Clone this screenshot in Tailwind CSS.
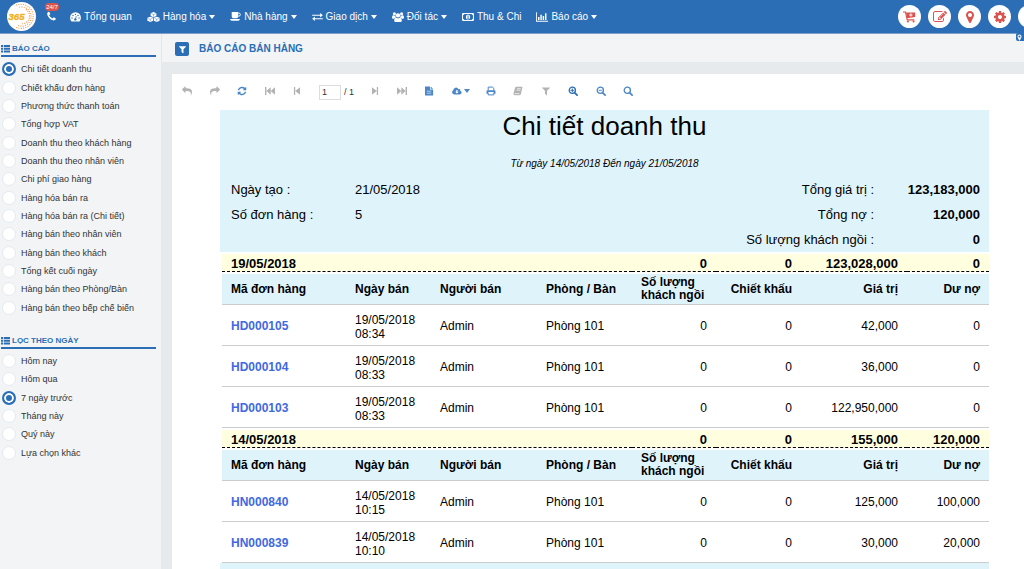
<!DOCTYPE html>
<html lang="vi">
<head>
    <meta charset="UTF-8">
    <meta name="viewport" content="width=device-width, initial-scale=1.0">
    <title>Báo cáo bán hàng</title>
    <script src="https://cdn.jsdelivr.net/npm/@tailwindcss/browser@4"></script>
</head>
<body class="min-h-screen flex flex-col overflow-x-hidden bg-[#e6eaed] font-['Liberation_Sans',Arial,sans-serif] text-[#333]">
    <!-- Shared icons -->
    <svg class="hidden">
        <symbol id="caret" viewBox="0 0 6 4"><path d="M0 0h6L3 4z"/></symbol>
        <symbol id="marker" viewBox="0 0 1792 1792"><path d="M1152 640q0-106-75-181t-181-75-181 75-75 181 75 181 181 75 181-75 75-181zm256 0q0 109-33 179l-364 774q-16 33-47.5 52t-67.5 19-67.5-19-46.5-52l-365-774q-33-70-33-179 0-212 150-362t362-150 362 150 150 362z"/></symbol>
        <symbol id="filter" viewBox="0 0 1792 1792"><path d="M1595 295q17 41-14 70l-493 493v742q0 42-39 59-13 5-25 5-27 0-45-19l-256-256q-19-19-19-45v-486l-493-493q-31-29-14-70 17-39 59-39h1280q42 0 59 39z"/></symbol>
        <symbol id="share" viewBox="0 0 1792 1792"><path d="M1792 640q0 26-19 45l-512 512q-19 19-45 19t-45-19-19-45v-256h-224q-98 0-175.5 6t-154 21.5-133 42.5-105.5 69.5-80 101-48.5 138.5-17.5 181q0 55 5 123 0 6 2.5 23.5t2.5 26.5q0 15-8.5 25t-23.5 10q-16 0-28-17-7-9-13-22t-13.5-30-10.5-24q-127-285-127-451 0-199 53-333 162-403 875-403h224v-256q0-26 19-45t45-19 45 19l512 512q19 19 19 45z"/></symbol>
        <symbol id="list" viewBox="0 0 9 8"><path d="M0 0h2.200v2H0zM3 0h6v2H3zM0 2.700h2.200v2H0zM3 2.700h6v2H3zM0 5.400h2.200v2H0zM3 5.400h6v2H3z"/></symbol>
        <symbol id="step" viewBox="0 0 10 10"><path d="M2 1.200 6.800 5 2 8.800zM6.800 1h1.300v8H6.800z"/></symbol>
        <symbol id="fast" viewBox="0 0 10 10"><path d="M0 1.200 4.300 5 0 8.800zM4.300 1.200 8.600 5 4.300 8.800zM8.600 1H10v8H8.600z"/></symbol>
        <symbol id="lens" viewBox="0 0 10 10"><circle cx="4.300" cy="4.300" r="3.100" fill="none" stroke="currentColor" stroke-width="1.300"/><path d="m6.800 6.800 2.300 2.300" stroke="currentColor" stroke-width="1.700" stroke-linecap="round"/></symbol>
    </svg>

    <header class="relative flex h-[34px] shrink-0 items-center border-b border-[#7f9fcb] bg-[#2b6eb5] text-white">
        <a href="#" aria-label="365" class="ml-[7px] shrink-0">
            <svg viewBox="0 0 30 30" class="size-[29px]">
                <circle cx="15" cy="15" r="15" fill="#fff"/>
                <g fill="none" stroke="#ee9445" stroke-linecap="round" stroke-width="1.200" stroke-dasharray=".1 2.300">
                    <path d="M10 3.200a12.500 12.500 0 1 1-1 22.800"/>
                    <path d="M13 5.200a10 10 0 1 1-3 18.500"/>
                    <path d="M20 8a8 8 0 0 1-5 14.500"/>
                </g>
                <text x="1.500" y="18.500" font-size="10" font-weight="bold" font-style="italic" fill="#f0b01e" stroke="#f0b01e" stroke-width=".3">365</text>
            </svg>
        </a>
        <a href="#" aria-label="24/7" class="relative ml-[10px] shrink-0">
            <svg viewBox="0 0 1792 1792" fill="currentColor" class="size-[11px]"><path d="M1600 1240q0 27-10 70.5t-21 68.5q-21 50-122 106-94 51-186 51-27 0-53-3.5t-57.5-12.5-47-14.5-55.5-20.5-49-18q-98-35-175-83-127-79-264-216t-216-264q-48-77-83-175-3-9-18-49t-20.5-55.5-14.5-47-12.5-57.5-3.5-53q0-92 51-186 56-101 106-122 25-11 68.5-21t70.5-10q14 0 21 3 18 6 53 76 11 19 30 54t35 63.5 31 53.5q3 4 17.5 25t21.5 35.5 7 28.5q0 20-28.5 50t-62 55-62 53-28.5 46q0 9 5 22.5t8.5 20.5 14 24 11.5 19q76 137 174 235t235 174q2 1 19 11.5t24 14 20.5 8.5 22.5 5q18 0 46-28.5t53-62 55-62 50-28.5q14 0 28.5 7t35.5 21.5 25 17.5q25 15 53.5 31t63.5 35 54 30q70 35 76 53 3 7 3 21z"/></svg>
            <span class="absolute -top-2 -left-px flex h-2 w-[14px] items-center justify-center rounded-full bg-[#d9534f] text-[6px] leading-none">24/7</span>
        </a>
        <nav class="ml-[13px] flex flex-1 items-center gap-[15px] text-[10px] leading-4 whitespace-nowrap">
            <a href="#" class="flex items-center gap-[3px]">
                <svg viewBox="0 0 16 14" class="h-[10px] w-[11px]"><path fill="currentColor" d="M2.300 13.500A7.900 7.900 0 1 1 13.700 13.500z"/><g fill="#2b6eb5"><circle cx="2.900" cy="8.500" r="1"/><circle cx="4.400" cy="4.800" r="1"/><circle cx="8" cy="3.200" r="1"/><circle cx="11.600" cy="4.800" r="1"/><circle cx="13.100" cy="8.500" r="1"/><circle cx="7.800" cy="10.500" r="1.700"/></g><path stroke="#2b6eb5" stroke-width="1" d="m7.800 10.500 1.400-5"/></svg>
                Tổng quan
            </a>
            <a href="#" class="flex items-center gap-[3px]">
                <svg viewBox="0 0 18 14" class="h-[10px] w-[13px]"><g fill="currentColor"><path d="m9 0 4 1.600v4L9 7.300 5 5.600v-4z"/><path d="m4.500 6.500 4 1.700v4L4.500 14l-4-1.800v-4z"/><path d="m13.500 6.500 4 1.700v4l-4 1.800-4-1.800v-4z"/></g><path fill="none" stroke="#2b6eb5" stroke-width=".6" d="m6 2.300 3 1.200 3-1.200M9 3.500v3M1.500 9l3 1.200 3-1.200M4.500 10.200v3M10.500 9l3 1.200 3-1.200M13.500 10.200v3"/></svg>
                Hàng hóa
                <svg class="h-[4px] w-[6px]" fill="currentColor"><use href="#caret"/></svg>
            </a>
            <a href="#" class="flex items-center gap-[3px]">
                <svg viewBox="0 0 16 13" class="h-[9px] w-[11px]"><path fill="currentColor" d="M2.500 0H12v6.500A2.500 2.500 0 0 1 9.500 9H5a2.500 2.500 0 0 1-2.500-2.500zM0 10.300h14.500Q14 12.500 12 12.500H2.500Q.5 12.500 0 10.300z"/><path fill="none" stroke="currentColor" stroke-width="1.400" d="M12 1.500h.8a2.200 2.200 0 0 1 0 4.500H12"/></svg>
                Nhà hàng
                <svg class="h-[4px] w-[6px]" fill="currentColor"><use href="#caret"/></svg>
            </a>
            <a href="#" class="flex items-center gap-[3px]">
                <svg viewBox="0 0 16 12" class="h-[8px] w-[11px]" fill="currentColor"><path d="M0 2.500h12V0l4 3.400-4 3.300V4.300H0zM16 7.700H4V5.300L0 8.700 4 12V9.500h12z"/></svg>
                Giao dịch
                <svg class="h-[4px] w-[6px]" fill="currentColor"><use href="#caret"/></svg>
            </a>
            <a href="#" class="flex items-center gap-[3px]">
                <svg viewBox="0 0 18 15" class="h-[10px] w-[12px]" fill="currentColor"><circle cx="3.600" cy="2.500" r="2.300"/><circle cx="14.400" cy="2.500" r="2.300"/><circle cx="9" cy="5" r="3.300"/><path d="M0 8.500Q0 5 2 5q2 .9 3 .4Q5 7.500 6 8.600 3.800 8.800 3 10H1.500Q0 10 0 8.500zM18 8.500Q18 5 16 5q-2 .9-3 .4 0 2.100-1 3.200 2.200.2 3 1.400h1.500q1.500 0 1.500-1.500zM3.300 13q0-4.500 3-4.500 2.700 1.600 5.400 0 3 0 3 4.500 0 2-2 2H5.300q-2 0-2-2z"/></svg>
                Đối tác
                <svg class="h-[4px] w-[6px]" fill="currentColor"><use href="#caret"/></svg>
            </a>
            <a href="#" class="flex items-center gap-[3px]">
                <svg viewBox="0 0 18 12" class="h-[8px] w-[12px]"><path fill="none" stroke="currentColor" stroke-width="1.500" d="M.8.8h16.400v10.400H.8z"/><path fill="currentColor" d="M1 1h3L1 4zM17 1h-3l3 3zM1 11h3L1 8zM17 11h-3l3-3z"/><ellipse cx="9" cy="6" rx="3.200" ry="3.800" fill="currentColor"/><path stroke="#2b6eb5" stroke-width="1.100" fill="none" d="M8 4.600 9.200 4v4M7.800 8h2.800"/></svg>
                Thu &amp; Chi
            </a>
            <a href="#" class="flex items-center gap-[3px]">
                <svg viewBox="0 0 18 14" class="h-[10px] w-[12px]" fill="currentColor"><path d="M0 0h1.300v12.700H18V14H0zM3 7h2.200v4.600H3zM6.500 3.500h2.200v8.100H6.500zM10 5.500h2.200v6.100H10zM13.500 1.500h2.200v10.100h-2.200z"/></svg>
                Báo cáo
                <svg class="h-[4px] w-[6px]" fill="currentColor"><use href="#caret"/></svg>
            </a>
        </nav>
        <div class="-mr-[17px] flex shrink-0 gap-[7px] text-[#d9534f]">
            <button type="button" aria-label="Giỏ hàng" class="flex size-[23px] items-center justify-center rounded-full bg-white">
                <svg viewBox="0 0 16 14" class="h-[12px] w-[13px]"><path fill="currentColor" d="M3.600 1.500H15V7L5 8.500z"/><path fill="none" stroke="currentColor" stroke-width="1.400" d="M0 .8h3l2.200 9.700H14"/><circle cx="6" cy="12.500" r="1.300" fill="currentColor"/><circle cx="13" cy="12.500" r="1.300" fill="currentColor"/><path stroke="#fff" stroke-width="1.200" d="M9.700 2.500v4M7.700 4.500h4"/></svg>
            </button>
            <button type="button" aria-label="Ghi chú" class="flex size-[23px] items-center justify-center rounded-full bg-white">
                <svg viewBox="0 0 1792 1792" fill="currentColor" class="size-[14px]"><path d="M888 1184l116-116-152-152-116 116v56h96v96h56zm440-720q-16-16-33 1l-350 350q-17 17-1 33t33-1l350-350q17-17 1-33zm80 594v190q0 119-84.5 203.5t-203.5 84.5h-832q-119 0-203.5-84.5t-84.5-203.5v-832q0-119 84.5-203.5t203.5-84.5h832q63 0 117 25 15 7 18 23 3 17-9 29l-49 49q-14 14-32 8-23-6-45-6h-832q-66 0-113 47t-47 113v832q0 66 47 113t113 47h832q66 0 113-47t47-113v-126q0-13 9-22l64-64q15-15 35-7t20 29zm-96-738l288 288-672 672h-288v-288zm444 132l-92 92-288-288 92-92q28-28 68-28t68 28l152 152q28 28 28 68t-28 68z"/></svg>
            </button>
            <button type="button" aria-label="Chi nhánh" class="flex size-[23px] items-center justify-center rounded-full bg-white">
                <svg class="size-[14px]" fill="currentColor"><use href="#marker"/></svg>
            </button>
            <button type="button" aria-label="Cài đặt" class="flex size-[23px] items-center justify-center rounded-full bg-white">
                <svg viewBox="0 0 1792 1792" fill="currentColor" class="size-[14px]"><path d="M1152 896q0-106-75-181t-181-75-181 75-75 181 75 181 181 75 181-75 75-181zm512-109v222q0 12-8 23t-20 13l-185 28q-19 54-39 91 35 50 107 138 10 12 10 25t-9 23q-27 37-99 108t-94 71q-12 0-26-9l-138-108q-44 23-91 38-16 136-29 186-7 28-36 28h-222q-14 0-24.5-8.5t-11.5-21.5l-28-184q-49-16-90-37l-141 107q-10 9-25 9-14 0-25-11-126-114-165-168-7-10-7-23 0-12 8-23 15-21 51-66.5t54-70.5q-27-50-41-99l-183-27q-13-2-21-12.5t-8-23.5v-222q0-12 8-23t19-13l186-28q14-46 39-92-40-57-107-138-10-12-10-24 0-10 9-23 26-36 98.5-107.5t94.5-71.5q13 0 26 10l138 107q44-23 91-38 16-136 29-186 7-28 36-28h222q14 0 24.5 8.5t11.5 21.5l28 184q49 16 90 37l142-107q9-9 24-9 13 0 25 10 129 119 165 170 7 8 7 22 0 12-8 23-15 21-51 66.5t-54 70.5q26 50 41 98l183 28q13 2 21 12.5t8 23.5z"/></svg>
            </button>
            <button type="button" aria-label="Tài khoản" class="flex size-[23px] items-center justify-center rounded-full bg-white">
                <svg viewBox="0 0 12 12" class="size-[12px]" fill="currentColor"><circle cx="6" cy="3.500" r="3"/><path d="M0 12q0-5 3-5h6q3 0 3 5z"/></svg>
            </button>
        </div>
        <span class="absolute top-[33px] right-0 flex h-[8px] w-[8px] items-center rounded-l-xs bg-[#2b6eb5]">
            <svg class="size-[7px]" fill="currentColor"><use href="#marker"/></svg>
        </span>
    </header>

    <div class="flex flex-1">
        <aside class="w-[161px] shrink-0 bg-[#f2f4f6] pr-[5px] pl-px">
            <h2 class="mb-[3px] flex h-[23px] items-end gap-[2px] border-b-2 border-[#2b6eb5] pb-[2px] text-[8px] leading-[9px] font-bold text-[#2b6eb5]">
                <svg class="h-[8px] w-[9px]" fill="currentColor"><use href="#list"/></svg>BÁO CÁO
            </h2>
            <div id="reportList" class="grid h-[257px] auto-rows-fr"></div>
            <h2 class="mt-[9px] mb-[3px] flex h-[23px] items-end gap-[2px] border-b-2 border-[#2b6eb5] pb-[2px] text-[8px] leading-[9px] font-bold text-[#2b6eb5]">
                <svg class="h-[8px] w-[9px]" fill="currentColor"><use href="#list"/></svg>LỌC THEO NGÀY
            </h2>
            <div id="dateList" class="grid h-[110px] auto-rows-fr"></div>
        </aside>

        <main class="flex min-w-0 flex-1 flex-col">
            <div class="flex h-[28px] items-center gap-[10px] border-l border-[#e2e5e9] bg-[#f2f4f6] pt-[2px] pl-[13px]">
                <button type="button" aria-label="Bộ lọc" class="flex size-[14px] items-center justify-center rounded-xs bg-[#2b6eb5] text-white">
                    <svg class="size-[9px]" fill="currentColor"><use href="#filter"/></svg>
                </button>
                <h1 class="text-[10px] leading-3 font-bold text-[#2b6eb5]">BÁO CÁO BÁN HÀNG</h1>
            </div>

            <section class="mt-3 ml-[11px] flex-1 bg-white">
                <!-- Report toolbar -->
                <div class="flex h-[36px] items-center pb-[2px] pl-[10px] text-[#4a86c8]">
                    <div class="flex w-[120px] justify-between">
                        <button type="button" aria-label="Quay lại" class="size-[10px] text-[#b3b3b3]"><svg class="size-[10px] -scale-x-100" fill="currentColor"><use href="#share"/></svg></button>
                        <button type="button" aria-label="Tiến tới" class="size-[10px] text-[#b3b3b3]"><svg class="size-[10px]" fill="currentColor"><use href="#share"/></svg></button>
                        <button type="button" aria-label="Làm mới" class="size-[10px]"><svg viewBox="0 0 1792 1792" class="size-[10px]" fill="currentColor"><path d="M1639 1056q0 5-1 7-64 268-268 434.5t-478 166.5q-146 0-282.5-55t-243.5-157l-129 129q-19 19-45 19t-45-19-19-45v-448q0-26 19-45t45-19h448q26 0 45 19t19 45-19 45l-137 137q71 66 161 102t187 36q134 0 250-65t186-179q11-17 53-117 8-23 30-23h192q13 0 22.5 9.5t9.500 22.500zm25-800v448q0 26-19 45t-45 19h-448q-26 0-45-19t-19-45 19-45l138-138q-148-137-349-137-134 0-250 65t-186 179q-11 17-53 117-8 23-30 23h-199q-13 0-22.5-9.5t-9.5-22.5v-7q65-268 270-434.5t480-166.5q146 0 284 55.5t245 156.5l130-129q19-19 45-19t45 19 19 45z"/></svg></button>
                        <button type="button" aria-label="Trang đầu" class="size-[10px] text-[#b3b3b3]"><svg class="size-[10px] -scale-x-100" fill="currentColor"><use href="#fast"/></svg></button>
                        <button type="button" aria-label="Trang trước" class="size-[10px] text-[#b3b3b3]"><svg class="size-[10px] -scale-x-100" fill="currentColor"><use href="#step"/></svg></button>
                    </div>
                    <label class="ml-[17px] flex items-center gap-[3px] pt-[2px] text-[9px] leading-3 text-[#333]">
                        <input type="text" value="1" aria-label="Trang" class="h-[15px] w-[22px] border border-[#ddd] pl-[2px] text-[9px]">
                        / 1
                    </label>
                    <div class="ml-[16px] flex w-[64px] justify-between">
                        <button type="button" aria-label="Trang sau" class="size-[10px] text-[#b3b3b3]"><svg class="size-[10px]" fill="currentColor"><use href="#step"/></svg></button>
                        <button type="button" aria-label="Trang cuối" class="size-[10px] text-[#b3b3b3]"><svg class="size-[10px]" fill="currentColor"><use href="#fast"/></svg></button>
                        <button type="button" aria-label="Xem trang" class="size-[10px]"><svg viewBox="0 0 10 10" class="size-[10px]"><path fill="currentColor" d="M1 .4h5v3h3.100v6.200H1zM6.700.4l2.400 2.400H6.700z"/><path stroke="#fff" stroke-width=".6" d="M2.800 5.200h4.500M2.800 7.200h4.500"/></svg></button>
                    </div>
                    <button type="button" aria-label="Tải xuống" class="ml-[18px] flex items-center gap-[2px]">
                        <svg viewBox="0 0 11 8" class="h-[8px] w-[10px]"><path fill="currentColor" d="M2.500 7.800A2.400 2.400 0 0 1 1.400 3.300a3 3 0 0 1 5.700-1.300 1.600 1.600 0 0 1 2 1.700 2.100 2.100 0 0 1-.6 4.100z"/><path fill="#fff" d="M4.700 2.900h1.400v1.800h1.300L5.400 6.700l-2-2h1.300z"/></svg>
                        <svg class="h-[4px] w-[6px]" fill="currentColor"><use href="#caret"/></svg>
                    </button>
                    <div class="ml-[16px] flex w-[147px] justify-between">
                        <button type="button" aria-label="In" class="size-[10px]"><svg viewBox="0 0 10 10" class="size-[10px]"><path fill="none" stroke="currentColor" d="M2.200 4.500V1.100h4.500l1.100 1.100v2.300M2.200 6.500v2.400h5.600V6.500"/><path fill="currentColor" d="M1.500 4.200h7q1 0 1 1v2.600H8V6H2v1.800H.5V5.200q0-1 1-1z"/></svg></button>
                        <button type="button" aria-label="Sổ" class="size-[10px] text-[#b3b3b3]"><svg viewBox="0 0 10 10" class="size-[10px]"><path fill="currentColor" d="M3.300.8h5.500q.8 0 .6.800L7.800 8.200q-.2 1-1.200 1H1.500Q0 9.200.5 7.500l1.500-5.500Q2.400.8 3.300.8z"/><path stroke="#fff" stroke-width=".7" d="M4 2.700h3.800M3.600 4.200h3.800M1.500 7.700h5"/></svg></button>
                        <button type="button" aria-label="Lọc" class="size-[10px] text-[#b3b3b3]"><svg class="size-[10px]" fill="currentColor"><use href="#filter"/></svg></button>
                        <button type="button" aria-label="Phóng to" class="size-[10px] text-[#2b6eb5]"><svg viewBox="0 0 10 10" class="size-[10px]"><use href="#lens"/><path stroke="currentColor" d="M2.500 4.300h3.600M4.300 2.500v3.600"/></svg></button>
                        <button type="button" aria-label="Thu nhỏ" class="size-[10px]"><svg viewBox="0 0 10 10" class="size-[10px]"><use href="#lens"/><path stroke="currentColor" d="M2.700 4.300h3.200"/></svg></button>
                        <button type="button" aria-label="Tìm kiếm" class="size-[10px]"><svg viewBox="0 0 10 10" class="size-[10px]"><use href="#lens"/></svg></button>
                    </div>
                </div>

                <!-- Report page -->
                <article class="mr-[35px] ml-[48px] text-black">
                    <div class="bg-[#dff3fb]">
                        <h2 class="text-center text-[26px] leading-8">Chi tiết doanh thu</h2>
                        <p class="mt-3 text-center text-[10px] leading-5 italic">Từ ngày 14/05/2018 Đến ngày 21/05/2018</p>
                        <div class="mt-[3px] flex justify-between pr-[9px] pl-[11px] text-[13px] leading-[25px]">
                            <dl class="grid auto-rows-min grid-cols-[124px_auto]">
                                <dt>Ngày tạo :</dt><dd>21/05/2018</dd>
                                <dt>Số đơn hàng :</dt><dd>5</dd>
                            </dl>
                            <dl class="grid grid-cols-[auto_106px] text-right">
                                <dt>Tổng giá trị :</dt><dd class="font-bold">123,183,000</dd>
                                <dt>Tổng nợ :</dt><dd class="font-bold">120,000</dd>
                                <dt>Số lượng khách ngồi :</dt><dd class="font-bold">0</dd>
                            </dl>
                        </div>
                    </div>
                    <div id="groups" class="pl-[2px]"></div>
                    <div class="h-[6px] bg-[#dff3fb]"></div>
                </article>
            </section>
        </main>
    </div>

    <script>
        const reports = [
            'Chi tiết doanh thu', 'Chiết khấu đơn hàng', 'Phương thức thanh toán', 'Tổng hợp VAT',
            'Doanh thu theo khách hàng', 'Doanh thu theo nhân viên', 'Chi phí giao hàng', 'Hàng hóa bán ra',
            'Hàng hóa bán ra (Chi tiết)', 'Hàng bán theo nhân viên', 'Hàng bán theo khách', 'Tổng kết cuối ngày',
            'Hàng bán theo Phòng/Bàn', 'Hàng bán theo bếp chế biến'
        ];
        const dates = ['Hôm nay', 'Hôm qua', '7 ngày trước', 'Tháng này', 'Quý này', 'Lựa chọn khác'];

        const groups = [
            {
                total: ['19/05/2018', '0', '0', '123,028,000', '0'],
                orders: [
                    ['HD000105', '19/05/2018', '08:34', '42,000', '0'],
                    ['HD000104', '19/05/2018', '08:33', '36,000', '0'],
                    ['HD000103', '19/05/2018', '08:33', '122,950,000', '0']
                ]
            },
            {
                total: ['14/05/2018', '0', '0', '155,000', '120,000'],
                orders: [
                    ['HN000840', '14/05/2018', '10:15', '125,000', '100,000'],
                    ['HN000839', '14/05/2018', '10:10', '30,000', '20,000']
                ]
            }
        ];

        function radios(name, items, selected) {
            return items.map((item, i) => `
                <label class="flex items-center gap-[5px] pl-px text-[9px] leading-3 whitespace-nowrap">
                    <input type="radio" name="${name}" ${i === selected ? 'checked' : ''} class="size-[14px] appearance-none rounded-full border border-[#e4eaef] bg-white checked:border-2 checked:border-[#2b6eb5] checked:bg-[#2b6eb5] checked:shadow-[inset_0_0_0_2px_white]">
                    ${item}
                </label>`).join('');
        }

        function orderRow([code, date, time, value, debt]) {
            return `
                <tr class="h-[41px] *:border-b *:border-[#ccc] *:px-[9px] *:pt-[3px]">
                    <td><a href="#" class="font-bold text-[#4169e1]">${code}</a></td>
                    <td class="leading-[14px]">${date}<br>${time}</td>
                    <td>Admin</td>
                    <td>Phòng 101</td>
                    <td class="text-right">0</td>
                    <td class="text-right">0</td>
                    <td class="text-right">${value}</td>
                    <td class="text-right">${debt}</td>
                </tr>`;
        }

        function groupTable({ total, orders }) {
            return `
                <table class="mt-[2px] w-full table-fixed border-separate border-spacing-0 text-[12px] leading-[13px]">
                    <colgroup>
                        <col class="w-[124px]"><col class="w-[85px]"><col class="w-[106px]"><col class="w-[95px]">
                        <col class="w-[84px]"><col class="w-[85px]"><col class="w-[106px]"><col class="w-[82px]">
                    </colgroup>
                    <tbody>
                        <tr class="h-[18px] bg-[#ffffe0] text-right text-[13px] font-bold *:border-b *:border-dashed *:border-black *:px-[9px] *:pt-px">
                            <td colspan="4" class="text-left">${total[0]}</td>
                            <td>${total[1]}</td>
                            <td>${total[2]}</td>
                            <td>${total[3]}</td>
                            <td>${total[4]}</td>
                        </tr>
                        <tr class="h-[33px] text-left *:border-t-2 *:border-b *:border-t-white *:border-b-[#ccc] *:bg-[#dff3fb] *:px-[9px]">
                            <th>Mã đơn hàng</th>
                            <th>Ngày bán</th>
                            <th>Người bán</th>
                            <th>Phòng / Bàn</th>
                            <th class="whitespace-nowrap">Số lượng<br>khách ngồi</th>
                            <th class="text-right">Chiết khấu</th>
                            <th class="text-right">Giá trị</th>
                            <th class="text-right">Dư nợ</th>
                        </tr>
                        ${orders.map(orderRow).join('')}
                    </tbody>
                </table>`;
        }

        document.getElementById('reportList').innerHTML = radios('report', reports, 0);
        document.getElementById('dateList').innerHTML = radios('date', dates, 2);
        document.getElementById('groups').innerHTML = groups.map(groupTable).join('');
    </script>
</body>
</html>
